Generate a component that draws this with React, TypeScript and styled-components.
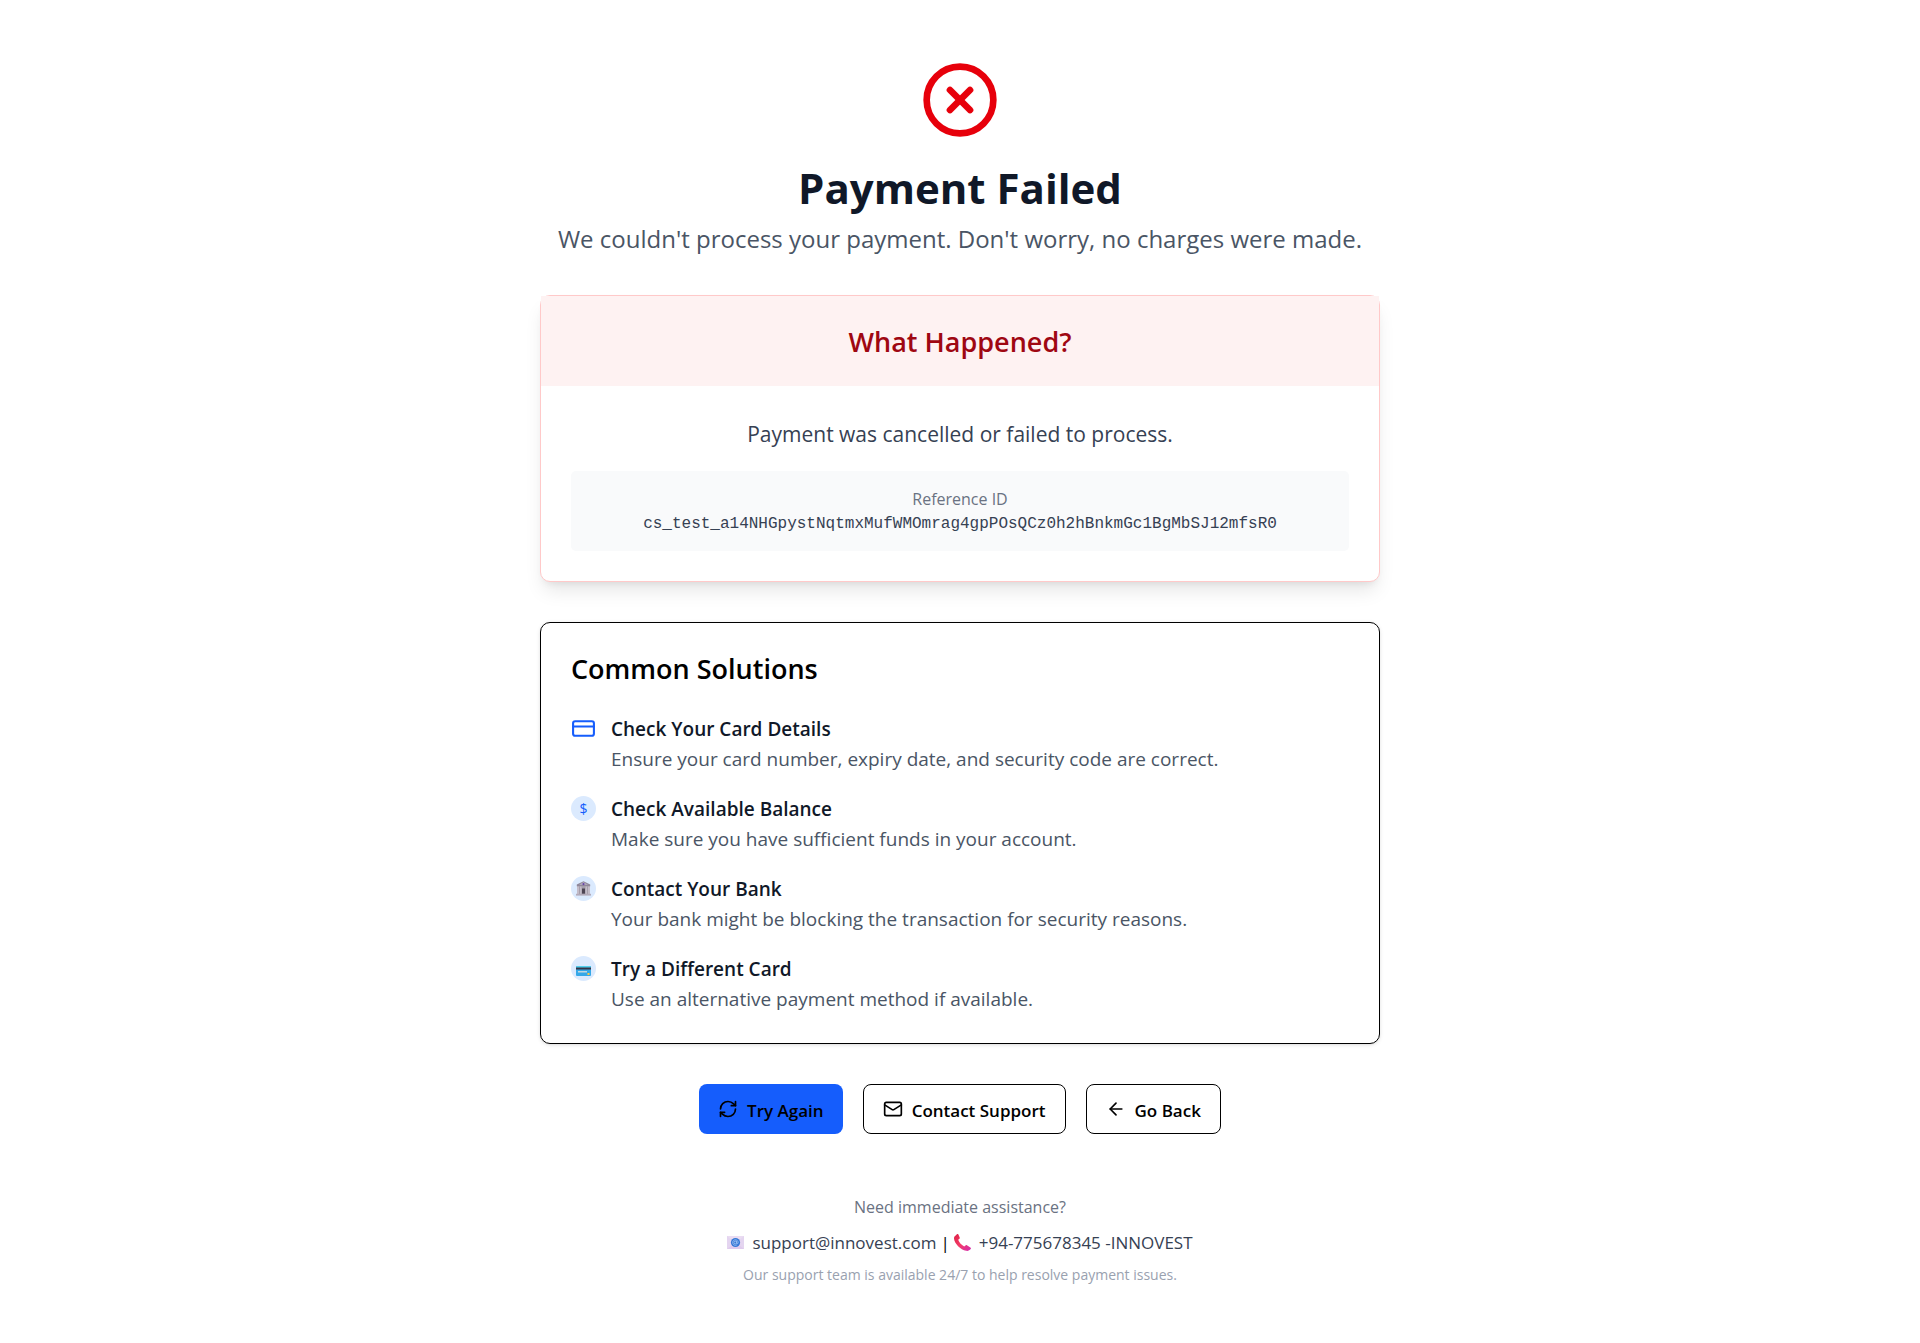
import React from "react";
import styled, { createGlobalStyle } from "styled-components";
import { ArrowLeft, CircleX, CreditCard, Mail, RefreshCw } from "lucide-react";

const GlobalStyle = createGlobalStyle`
  *, *::before, *::after { box-sizing: border-box; }
  body {
    margin: 0;
    background: #ffffff;
    color: #000000;
    font-family: "Open Sans", "Noto Sans", sans-serif;
    font-size: 19px;
    line-height: 30px;
  }
  h1, h2, h3, p, ul { margin: 0; padding: 0; }
  svg { display: block; flex-shrink: 0; }
`;

const Page = styled.main`
  display: flex;
  flex-direction: column;
  gap: 40px;
  width: 100%;
  max-width: 880px;
  margin: 0 auto;
  padding: 60px 20px;
`;

const Hero = styled.header`
  display: flex;
  flex-direction: column;
  align-items: center;
  text-align: center;
`;

const Title = styled.h1`
  margin: 20px 0 0;
  color: #101828;
  font-size: 42px;
  font-weight: 700;
  line-height: 55px;
`;

const Subtitle = styled.p`
  padding: 8px 0 0;
  color: #4a5565;
  font-size: 24px;
  line-height: 32px;
`;

const Card = styled.section<{ $tone: "danger" | "plain" }>`
  border: 1px solid ${(p) => (p.$tone === "danger" ? "#ffc9c9" : "#000000")};
  border-radius: 10px;
  background: #ffffff;
  box-shadow: ${(p) =>
    p.$tone === "danger"
      ? "0 12px 19px -4px rgba(0, 0, 0, 0.1), 0 5px 8px -5px rgba(0, 0, 0, 0.1)"
      : "0 1px 4px rgba(0, 0, 0, 0.1), 0 1px 3px -1px rgba(0, 0, 0, 0.1)"};
`;

const CardHeader = styled.div<{ $tone: "danger" | "plain" }>`
  padding: 31px 30px 29px;
  background: ${(p) => (p.$tone === "danger" ? "#fef2f2" : "transparent")};
  color: ${(p) => (p.$tone === "danger" ? "#9f0712" : "#000000")};
  text-align: ${(p) => (p.$tone === "danger" ? "center" : "left")};
`;

const CardTitle = styled.h2`
  font-size: 27px;
  font-weight: 600;
  line-height: 30px;
`;

const Explanation = styled.div`
  display: flex;
  flex-direction: column;
  gap: 19px;
  padding: 31px 30px 30px;
  text-align: center;
`;

const Reason = styled.p`
  color: #364153;
  font-size: 21px;
  line-height: 35px;
`;

const Reference = styled.div`
  padding: 16px 15px 14px;
  border-radius: 5px;
  background: #f9fafb;
`;

const ReferenceLabel = styled.p`
  color: #6a7282;
  font-size: 16px;
  line-height: 25px;
`;

const ReferenceCode = styled.p`
  color: #364153;
  font-family: "Liberation Mono", monospace;
  font-size: 16px;
  line-height: 25px;
  overflow-wrap: anywhere;
`;

const Solutions = styled.ul`
  display: flex;
  flex-direction: column;
  gap: 20px;
  padding: 1px 30px 29px;
  list-style: none;
`;

const Solution = styled.li`
  display: flex;
  gap: 15px;
`;

const SolutionIcon = styled.span<{ $filled: boolean }>`
  display: flex;
  flex-shrink: 0;
  align-items: center;
  justify-content: center;
  width: 25px;
  height: 25px;
  margin-top: 2px;
  border-radius: 50%;
  background: ${(p) => (p.$filled ? "#dbeafe" : "transparent")};
  color: #155dfc;
  font-size: 14px;
  line-height: 20px;
`;

const SolutionTitle = styled.h3`
  color: #101828;
  font-size: 19px;
  font-weight: 600;
  line-height: 30px;
`;

const SolutionText = styled.p`
  color: #4a5565;
`;

const Actions = styled.div`
  display: flex;
  flex-wrap: wrap;
  justify-content: center;
  gap: 20px;
`;

const ActionButton = styled.button<{ $primary?: boolean }>`
  display: flex;
  align-items: center;
  gap: 9px;
  height: 50px;
  padding: 0 19px;
  border: ${(p) => (p.$primary ? "0" : "1px solid #000000")};
  border-radius: 8px;
  background: ${(p) => (p.$primary ? "#155dfc" : "#ffffff")};
  color: #000000;
  font-family: inherit;
  font-size: 17px;
  font-weight: 600;
  line-height: 25px;
  cursor: pointer;
`;

const ActionLabel = styled.span`
  padding-top: 2px;
`;

const Footer = styled.footer`
  display: flex;
  flex-direction: column;
  gap: 10px;
  padding-top: 21px;
  text-align: center;
`;

const FooterLead = styled.p`
  color: #6a7282;
  font-size: 16px;
  line-height: 25px;
`;

const Contacts = styled.p`
  display: flex;
  flex-wrap: wrap;
  justify-content: center;
  gap: 4px;
  font-size: 17px;
  line-height: 25px;
`;

const ContactLink = styled.a`
  display: flex;
  align-items: center;
  gap: 8px;
  color: #364153;
  text-decoration: none;
`;

const FooterNote = styled.p`
  color: #99a1af;
  font-size: 14px;
  line-height: 20px;
`;

const BankGlyph = () => (
  <svg width="15" height="15" viewBox="0 0 15 15" aria-hidden="true">
    <path d="M7.500 .2 .8 3.400V5.200H14.200V3.400Z" fill="#8f8799" />
    <path d="M7.500 1.300 3 3.700H12Z" fill="#b9b0c3" />
    <circle cx="7.500" cy="3.100" r="1.100" fill="#6644a8" />
    <rect x="1" y="5" width="13" height="8" fill="#a59eab" />
    <path d="M1 5.500h2V13H1zM4 5.500h1.500V13H4zM9.500 5.500H11V13H9.500zM12 5.500h2V13h-2z" fill="#c3bcc9" />
    <rect x="6" y="7.500" width="3" height="5.300" fill="#4d4453" />
    <rect x="0" y="12.800" width="15" height="1.800" fill="#b3abba" />
  </svg>
);

const CardGlyph = () => (
  <svg width="15" height="15" viewBox="0 0 15 15" aria-hidden="true">
    <rect y="5" width="15" height="10" rx="1" fill="#35a8e8" />
    <path d="M1 5h13a1 1 0 0 1 1 1v1H0V6a1 1 0 0 1 1-1z" fill="#50d0ee" />
    <rect y="6.500" width="15" height="2" fill="#343447" />
    <rect x="2" y="10" width="9" height="1.500" fill="#c3d7df" />
    <rect x="11.500" y="12" width="2" height="2" fill="#ffc83d" />
  </svg>
);

const EmailGlyph = () => (
  <svg width="17" height="17" viewBox="0 0 17 17" aria-hidden="true">
    <rect y="2" width="17" height="13" fill="#eadcf2" />
    <path d="M0 2 8.500 9 17 2v13H0z" fill="#e4d5f0" />
    <path d="M0 15 8.500 8 17 15z" fill="#dfcbed" />
    <circle cx="8.500" cy="8.500" r="4.600" fill="#3578d6" />
    <circle cx="8.300" cy="8.500" r="1.400" fill="none" stroke="#a9c9f5" strokeWidth=".8" />
    <path d="M9.700 7v2.100c0 1 1.500.8 1.500-.7a2.800 2.800 0 1 0-1.300 2.500" fill="none" stroke="#a9c9f5" strokeWidth=".7" />
  </svg>
);

const PhoneGlyph = () => (
  <svg width="17" height="17" viewBox="0 0 17 17" aria-hidden="true">
    <defs>
      <linearGradient id="handset" x1="0" y1="0" x2="1" y2="1">
        <stop offset="0" stopColor="#dc2145" />
        <stop offset=".5" stopColor="#f43b68" />
        <stop offset="1" stopColor="#d22cb0" />
      </linearGradient>
    </defs>
    <path
      d="M.5 2.500 3.200.1c.5-.3 1-.1 1.200.4l1.300 3c.2.5.1.9-.3 1.200L4.200 5.800c.7 2.400 3.100 5.200 6 6.700l1.400-1.100c.4-.4.9-.4 1.300-.1l3.500 2.300c.6.4.7 1 .3 1.500-1.200 1.500-2.700 2-4.500 1.700C6.500 15.800.4 9.500 0 4.500c0-.8 0-1.500.5-2z"
      fill="url(#handset)"
    />
  </svg>
);

const solutions = [
  {
    title: "Check Your Card Details",
    text: "Ensure your card number, expiry date, and security code are correct.",
    icon: <CreditCard size={25} aria-hidden />,
    filled: false,
  },
  {
    title: "Check Available Balance",
    text: "Make sure you have sufficient funds in your account.",
    icon: "$",
    filled: true,
  },
  {
    title: "Contact Your Bank",
    text: "Your bank might be blocking the transaction for security reasons.",
    icon: <BankGlyph />,
    filled: true,
  },
  {
    title: "Try a Different Card",
    text: "Use an alternative payment method if available.",
    icon: <CardGlyph />,
    filled: true,
  },
];

export default function App() {
  return (
    <>
      <GlobalStyle />
      <Page>
        <Hero>
          <CircleX size={80} color="#e7000b" aria-hidden />
          <Title>Payment Failed</Title>
          <Subtitle>We couldn't process your payment. Don't worry, no charges were made.</Subtitle>
        </Hero>

        <Card $tone="danger">
          <CardHeader $tone="danger">
            <CardTitle>What Happened?</CardTitle>
          </CardHeader>
          <Explanation>
            <Reason>Payment was cancelled or failed to process.</Reason>
            <Reference>
              <ReferenceLabel>Reference ID</ReferenceLabel>
              <ReferenceCode>cs_test_a14NHGpystNqtmxMufWMOmrag4gpPOsQCz0h2hBnkmGc1BgMbSJ12mfsR0</ReferenceCode>
            </Reference>
          </Explanation>
        </Card>

        <Card $tone="plain">
          <CardHeader $tone="plain">
            <CardTitle>Common Solutions</CardTitle>
          </CardHeader>
          <Solutions>
            {solutions.map((s) => (
              <Solution key={s.title}>
                <SolutionIcon $filled={s.filled}>{s.icon}</SolutionIcon>
                <div>
                  <SolutionTitle>{s.title}</SolutionTitle>
                  <SolutionText>{s.text}</SolutionText>
                </div>
              </Solution>
            ))}
          </Solutions>
        </Card>

        <Actions>
          <ActionButton type="button" $primary>
            <RefreshCw size={20} aria-hidden />
            <ActionLabel>Try Again</ActionLabel>
          </ActionButton>
          <ActionButton type="button">
            <Mail size={20} aria-hidden />
            <ActionLabel>Contact Support</ActionLabel>
          </ActionButton>
          <ActionButton type="button">
            <ArrowLeft size={20} aria-hidden />
            <ActionLabel>Go Back</ActionLabel>
          </ActionButton>
        </Actions>

        <Footer>
          <FooterLead>Need immediate assistance?</FooterLead>
          <Contacts>
            <ContactLink href="mailto:support@innovest.com">
              <EmailGlyph />
              support@innovest.com
            </ContactLink>
            <span>|</span>
            <ContactLink href="tel:+94775678345">
              <PhoneGlyph />
              +94-775678345 -INNOVEST
            </ContactLink>
          </Contacts>
          <FooterNote>Our support team is available 24/7 to help resolve payment issues.</FooterNote>
        </Footer>
      </Page>
    </>
  );
}
